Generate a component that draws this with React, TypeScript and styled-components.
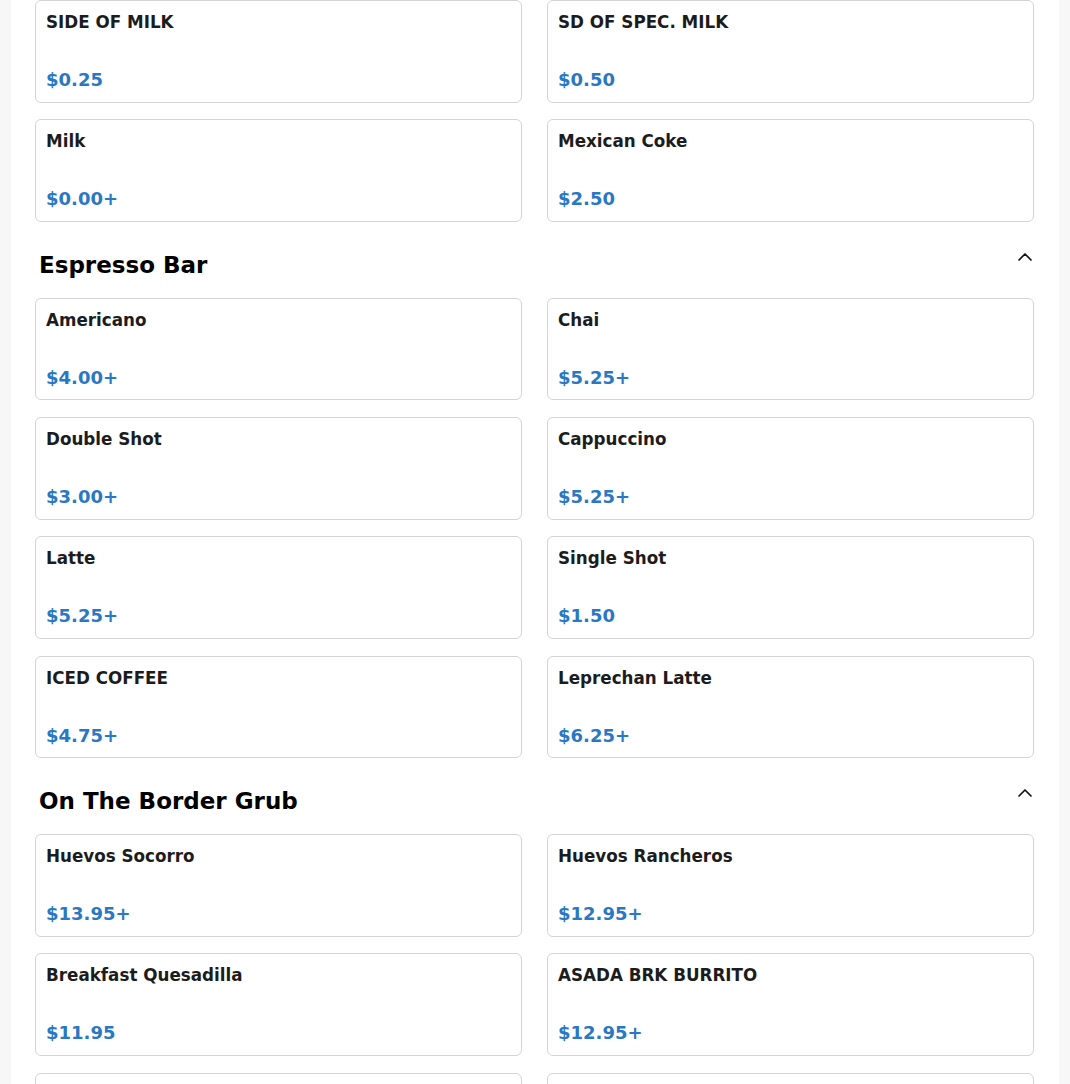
import React from 'react';
import styled, { createGlobalStyle } from 'styled-components';
import { ChevronUp } from 'lucide-react';

const GlobalStyle = createGlobalStyle`
  html, body {
    margin: 0;
    padding: 0;
    background: #f7f7f7;
  }
  body {
    font-family: 'DejaVu Sans', 'Liberation Sans', sans-serif;
  }
`;

const Page = styled.div`
  background: #f7f7f7;
  min-height: 100vh;
`;

const Panel = styled.main`
  width: 1048px;
  margin: 0 11px;
  background: #ffffff;
  padding: 0 25px 40px 24px;
  box-sizing: border-box;
  min-height: 100vh;
`;

const Section = styled.section`
  display: flex;
  flex-direction: column;
`;

const SectionHeader = styled.div`
  display: flex;
  justify-content: space-between;
  align-items: flex-start;
  margin: 23px -3px 20px 0;
`;

const SectionTitle = styled.h2`
  margin: 0;
  padding: 7px 0 0 4px;
  font-size: 23px;
  line-height: 26px;
  font-weight: 700;
  color: #000;
`;

const Toggle = styled.button`
  border: 0;
  background: transparent;
  padding: 0;
  width: 24px;
  height: 24px;
  color: #111;
  display: flex;
  align-items: center;
  justify-content: center;
  cursor: pointer;
`;

const ItemGrid = styled.div`
  display: grid;
  grid-template-columns: 1fr 1fr;
  column-gap: 25px;
  row-gap: 16.8px;
`;

const ItemCard = styled.div`
  display: flex;
  flex-direction: column;
  border: 1px solid #d4d4d4;
  border-radius: 6px;
  padding: 11px 10px 11.5px;
  background: #fff;
`;

const ItemName = styled.div`
  font-size: 16.75px;
  line-height: 20px;
  font-weight: 700;
  color: #1c1c1c;
`;

const ItemPrice = styled.div`
  margin-top: 37px;
  font-size: 18px;
  line-height: 21px;
  font-weight: 700;
  color: #2a78c2;
`;

type Item = { name: string; price: string };
type MenuSection = { title?: string; items: Item[] };

const menu: MenuSection[] = [
  {
    items: [
      { name: 'SIDE OF MILK', price: '$0.25' },
      { name: 'SD OF SPEC. MILK', price: '$0.50' },
      { name: 'Milk', price: '$0.00+' },
      { name: 'Mexican Coke', price: '$2.50' },
    ],
  },
  {
    title: 'Espresso Bar',
    items: [
      { name: 'Americano', price: '$4.00+' },
      { name: 'Chai', price: '$5.25+' },
      { name: 'Double Shot', price: '$3.00+' },
      { name: 'Cappuccino', price: '$5.25+' },
      { name: 'Latte', price: '$5.25+' },
      { name: 'Single Shot', price: '$1.50' },
      { name: 'ICED COFFEE', price: '$4.75+' },
      { name: 'Leprechan Latte', price: '$6.25+' },
    ],
  },
  {
    title: 'On The Border Grub',
    items: [
      { name: 'Huevos Socorro', price: '$13.95+' },
      { name: 'Huevos Rancheros', price: '$12.95+' },
      { name: 'Breakfast Quesadilla', price: '$11.95' },
      { name: 'ASADA BRK BURRITO', price: '$12.95+' },
      { name: 'Chilaquiles', price: '$12.95+' },
      { name: 'Breakfast Burrito', price: '$11.95+' },
    ],
  },
];

const App: React.FC = () => {
  return (
    <Page>
      <GlobalStyle />
      <Panel>
        {menu.map((section, index) => (
          <Section key={index}>
            {section.title && (
              <SectionHeader>
                <SectionTitle>{section.title}</SectionTitle>
                <Toggle aria-label="Collapse section">
                  <ChevronUp size={24} strokeWidth={1.75} />
                </Toggle>
              </SectionHeader>
            )}
            <ItemGrid>
              {section.items.map((item, itemIndex) => (
                <ItemCard key={itemIndex}>
                  <ItemName>{item.name}</ItemName>
                  <ItemPrice>{item.price}</ItemPrice>
                </ItemCard>
              ))}
            </ItemGrid>
          </Section>
        ))}
      </Panel>
    </Page>
  );
};

export default App;
